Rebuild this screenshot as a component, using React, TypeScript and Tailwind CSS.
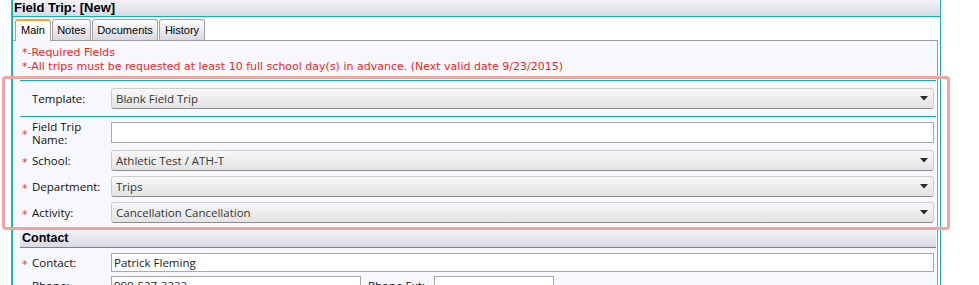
import React from "react";

const labelFont = "font-['Open_Sans','Noto_Sans',sans-serif]";

function Arrow() {
  return (
    <svg width="8" height="5" viewBox="0 0 8 5" className="shrink-0">
      <polygon points="0,0 8,0 4,4.5" fill="#2b2b2b" />
    </svg>
  );
}

function Star() {
  return (
    <span className="absolute left-[2px] top-1/2 -translate-y-[40%] text-[11px] leading-none text-[#e83a3a] font-['DejaVu_Sans',sans-serif]">
      *
    </span>
  );
}

function SelectBox({ value }: { value: string }) {
  return (
    <div className="flex-1 h-[21px] flex items-center justify-between pl-[4px] pr-[5px] rounded-[3px] border border-[#cdcdd2] border-b-[#8c8c8c] bg-gradient-to-b from-[#f8f8f8] to-[#e3e3e3]">
      <span className={`text-[11.5px] leading-none text-[#353535] ${labelFont}`}>{value}</span>
      <Arrow />
    </div>
  );
}

function Row({
  label,
  required,
  children,
  className = "",
  h = "h-[21px]",
}: {
  label: React.ReactNode;
  required?: boolean;
  children: React.ReactNode;
  className?: string;
  h?: string;
}) {
  return (
    <div className={`relative flex items-center ${h} mr-[2px] ${className}`}>
      {required && <Star />}
      <div className={`w-[91px] shrink-0 pl-[12px] text-[11.5px] leading-[13px] text-[#111] ${labelFont}`}>
        {label}
      </div>
      {children}
    </div>
  );
}

export default function App() {
  return (
    <div className="relative w-[979px] h-[285px] overflow-hidden bg-white">
      <div className="ml-[11px] w-[930px] h-[285px] border-l border-[#8f8f8f]">
        <div className="h-full border-x border-[#13b1b4]">
          {/* header */}
          <div className="h-[17px] border-b border-[#13b1b4] bg-gradient-to-b from-[#f4f4f8] to-[#d9d9e4] pl-[1px] text-[13px] leading-[16px] font-bold text-black font-['Liberation_Sans',Arial,sans-serif]">
            Field Trip: [New]
          </div>

          {/* tabs */}
          <div className="flex items-end h-[23px] pl-[2px] gap-[1px] font-['Liberation_Sans',Arial,sans-serif] text-[11px] text-black">
            <div className="relative z-10 w-[36px] h-[22px] -mb-[1px] flex items-center justify-center rounded-t-[3px] border-x border-t-2 border-x-[#a3a3a3] border-t-[#f2a52a] bg-gradient-to-b from-[#ffffff] to-[#f6f6f8] pb-[2px]">
              Main
            </div>
            <div className="w-[39px] h-[21px] flex items-center justify-center rounded-t-[3px] border-x border-t border-[#a3a3a3] bg-gradient-to-b from-[#fdfdfd] to-[#d9d9df]">
              Notes
            </div>
            <div className="w-[66px] h-[21px] flex items-center justify-center rounded-t-[3px] border-x border-t border-[#a3a3a3] bg-gradient-to-b from-[#fdfdfd] to-[#d9d9df]">
              Documents
            </div>
            <div className="w-[46px] h-[21px] flex items-center justify-center rounded-t-[3px] border-x border-t border-[#a3a3a3] bg-gradient-to-b from-[#fdfdfd] to-[#d9d9df]">
              History
            </div>
          </div>

          {/* panel */}
          <div className="mr-[2px] h-[260px] border-t border-r border-[#9a9a9a] bg-[#f7f8fd]">
            <div className="pl-[9px] pt-[5px] text-[11px] leading-[14px] text-[#ff1a1a] font-['DejaVu_Sans',Verdana,sans-serif]">
              <div>*-Required Fields</div>
              <div>*-All trips must be requested at least 10 full school day(s) in advance. (Next valid date 9/23/2015)</div>
            </div>

            <div className="ml-[7px] mr-[1px] mt-[6px]">
              {/* template */}
              <div className="border-y border-[#13b1b4] pt-[7px] pb-[7px]">
                <Row label="Template:">
                  <SelectBox value="Blank Field Trip" />
                </Row>
              </div>

              <Row
                required
                className="mt-[5px]"
                label={
                  <>
                    Field Trip
                    <br />
                    Name:
                  </>
                }
              >
                <div className="flex-1 h-[21px] border border-[#a9a9a9] bg-white" />
              </Row>

              <Row required label="School:" className="mt-[7px]">
                <SelectBox value="Athletic Test / ATH-T" />
              </Row>
              <Row required label="Department:" className="mt-[5px]">
                <SelectBox value="Trips" />
              </Row>
              <Row required label="Activity:" className="mt-[5px]">
                <SelectBox value="Cancellation Cancellation" />
              </Row>

              {/* contact header */}
              <div className="mt-[6px] h-[19px] border-b border-[#13b1b4] bg-gradient-to-b from-[#f4f4f8] to-[#d9d9e4] pl-[2px] text-[12.5px] leading-[19px] font-bold text-black font-['Liberation_Sans',Arial,sans-serif]">
                Contact
              </div>

              <Row required label="Contact:" className="mt-[5px]" h="h-[19px]">
                <div className={`flex-1 h-[19px] flex items-center pl-[2px] border border-[#a9a9a9] bg-white text-[11.5px] text-[#231a2e] ${labelFont}`}>
                  Patrick Fleming
                </div>
              </Row>

              <div className={`relative flex items-center h-[19px] mt-[4px] text-[11.5px] text-[#111] ${labelFont}`}>
                <div className="w-[91px] shrink-0 pl-[12px]">Phone:</div>
                <div className="w-[250px] h-[19px] flex items-center pl-[2px] border border-[#a9a9a9] bg-white text-[#231a2e]">
                  999-527-3333
                </div>
                <div className="w-[73px] shrink-0 pl-[7px]">Phone Ext:</div>
                <div className="w-[120px] h-[19px] border border-[#a9a9a9] bg-white" />
              </div>
            </div>
          </div>
        </div>
      </div>

      {/* annotation highlight */}
      <div className="pointer-events-none absolute left-[2px] top-[76px] w-[948px] h-[154px] rounded-[4px] border-[3px] border-[#f4a3a3]" />
    </div>
  );
}
